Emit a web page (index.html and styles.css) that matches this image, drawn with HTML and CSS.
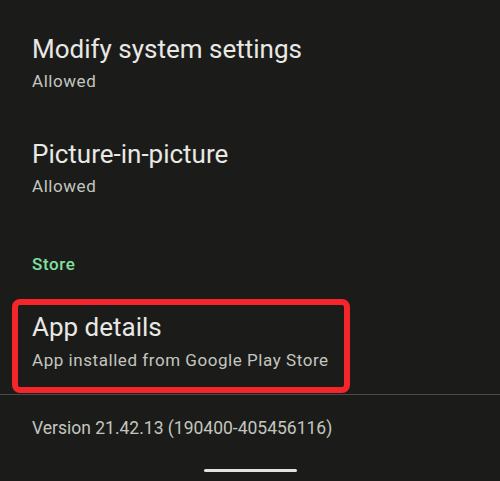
FILE: index.html
```html
<!DOCTYPE html>
<html lang="en">
<head>
<meta charset="utf-8">
<title>App info</title>
<link rel="stylesheet" href="styles.css">
</head>
<body>
<main class="screen">
  <div class="pref pref-first">
    <div class="pref-title">Modify system settings</div>
    <div class="pref-summary">Allowed</div>
  </div>
  <div class="pref pref-second">
    <div class="pref-title">Picture-in-picture</div>
    <div class="pref-summary">Allowed</div>
  </div>
  <div class="category">Store</div>
  <div class="pref pref-highlight">
    <div class="pref-title">App details</div>
    <div class="pref-summary">App installed from Google Play Store</div>
  </div>
  <div class="divider"></div>
  <div class="version">Version 21.42.13 (190400-405456116)</div>
  <div class="nav-bar"><span class="home-handle"></span></div>
</main>
</body>
</html>
```
FILE: styles.css
```css
html, body {
  margin: 0;
  padding: 0;
  background: #1b1c1a;
}
.screen {
  width: 500px;
  height: 481px;
  overflow: hidden;
  font-family: Roboto, "Noto Sans", sans-serif;
  display: flex;
  flex-direction: column;
}
.pref {
  padding-left: 32px;
}
.pref-title {
  font-size: 26px;
  line-height: 34px;
  color: #e8e8e4;
}
.pref-summary {
  font-size: 17px;
  line-height: 24px;
  letter-spacing: 0.55px;
  color: #c3c6bf;
  margin-top: 3px;
}
.pref-first {
  padding-top: 32px;
}
.pref-second {
  padding-top: 44px;
}
.category {
  margin-top: 54px;
  padding-left: 32px;
  font-size: 17px;
  line-height: 24px;
  font-weight: 500;
  letter-spacing: 0.6px;
  color: #82e0a0;
}
.pref-highlight {
  margin: 23px 0 0 12px;
  width: 338px;
  box-sizing: border-box;
  height: 94px;
  border: 6px solid #f5262b;
  border-radius: 8px;
  padding-left: 14px;
  padding-top: 5px;
}
.pref-highlight .pref-summary {
  margin-top: 4px;
}
.divider {
  height: 1px;
  margin-top: 1px;
  background: #4a4b48;
}
.version {
  margin-top: 21px;
  padding-left: 32px;
  font-size: 17.5px;
  line-height: 24px;
  color: #c3c6bf;
}
.nav-bar {
  display: flex;
  justify-content: center;
  margin-top: 29px;
}
.home-handle {
  width: 93px;
  height: 3px;
  border-radius: 2px;
  background: #e2e2de;
}
```
